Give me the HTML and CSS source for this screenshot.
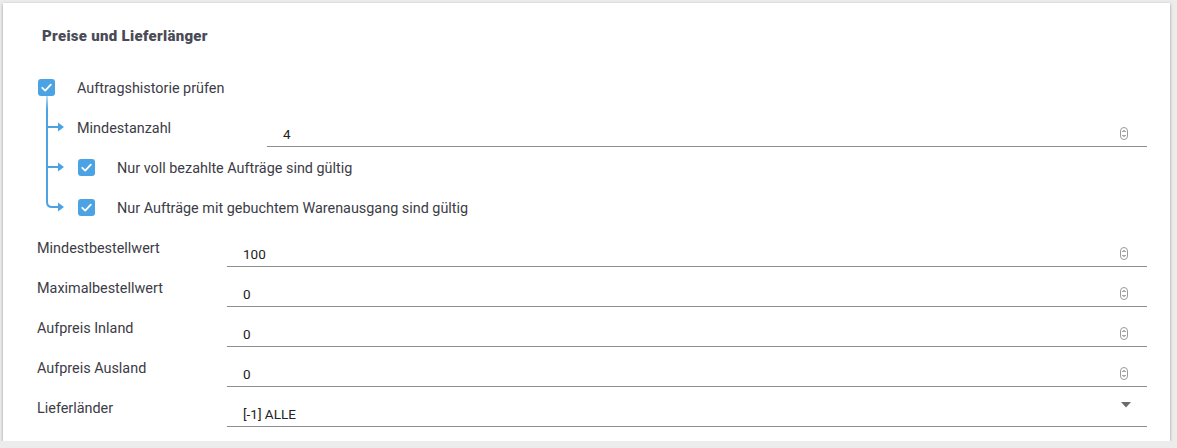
FILE: index.html
```html
<!DOCTYPE html>
<html lang="de">
<head>
<meta charset="utf-8">
<title>Preise und Lieferlänger</title>
<link rel="stylesheet" href="styles.css">
</head>
<body>
<div class="card">
  <h2 class="title">Preise und Lieferlänger</h2>

  <div class="check-row">
    <span class="cb"><svg viewBox="0 0 17 17" width="17" height="17"><path d="M4.3 8.8 L7.2 11.6 L12.8 5.6" fill="none" stroke="#fff" stroke-width="1.8" stroke-linecap="round" stroke-linejoin="round"/></svg></span>
    <span class="cb-label">Auftragshistorie prüfen</span>
  </div>

  <div class="group">
    <svg class="tree" viewBox="0 0 40 131" width="40" height="131">
      <defs>
        <linearGradient id="fade" x1="0" y1="0" x2="0" y2="1">
          <stop offset="0" stop-color="#4ba3e3" stop-opacity="0.35"/>
          <stop offset="0.12" stop-color="#4ba3e3" stop-opacity="1"/>
        </linearGradient>
      </defs>
      <path d="M10 0 L10 106 Q10 111 15 111 L22 111" fill="none" stroke="url(#fade)" stroke-width="2"/>
      <path d="M10 31 L22 31 M10 71 L22 71" fill="none" stroke="#4ba3e3" stroke-width="2"/>
      <path d="M21 26.5 L27 31 L21 35.5 Z M21 66.5 L27 71 L21 75.5 Z M21 106.5 L27 111 L21 115.5 Z" fill="#4ba3e3"/>
    </svg>
    <div class="group-rows">
      <div class="field-row">
        <span class="label">Mindestanzahl</span>
        <div class="input"><span class="value">4</span><span class="spin"><svg viewBox="0 0 8 13" width="8" height="13"><rect x="0.5" y="0.5" width="7" height="12" rx="3.5" fill="none" stroke="#9a9a9a" stroke-width="1"/><path d="M2.5 5 L4 3.5 L5.5 5 M2.5 8 L4 9.5 L5.5 8" fill="none" stroke="#555" stroke-width="1"/></svg></span></div>
      </div>
      <div class="check-row">
        <span class="cb"><svg viewBox="0 0 17 17" width="17" height="17"><path d="M4.3 8.8 L7.2 11.6 L12.8 5.6" fill="none" stroke="#fff" stroke-width="1.8" stroke-linecap="round" stroke-linejoin="round"/></svg></span>
        <span class="cb-label">Nur voll bezahlte Aufträge sind gültig</span>
      </div>
      <div class="check-row">
        <span class="cb"><svg viewBox="0 0 17 17" width="17" height="17"><path d="M4.3 8.8 L7.2 11.6 L12.8 5.6" fill="none" stroke="#fff" stroke-width="1.8" stroke-linecap="round" stroke-linejoin="round"/></svg></span>
        <span class="cb-label">Nur Aufträge mit gebuchtem Warenausgang sind gültig</span>
      </div>
    </div>
  </div>

  <div class="field-row">
    <span class="label">Mindestbestellwert</span>
    <div class="input"><span class="value">100</span><span class="spin"><svg viewBox="0 0 8 13" width="8" height="13"><rect x="0.5" y="0.5" width="7" height="12" rx="3.5" fill="none" stroke="#9a9a9a" stroke-width="1"/><path d="M2.5 5 L4 3.5 L5.5 5 M2.5 8 L4 9.5 L5.5 8" fill="none" stroke="#555" stroke-width="1"/></svg></span></div>
  </div>
  <div class="field-row">
    <span class="label">Maximalbestellwert</span>
    <div class="input"><span class="value">0</span><span class="spin"><svg viewBox="0 0 8 13" width="8" height="13"><rect x="0.5" y="0.5" width="7" height="12" rx="3.5" fill="none" stroke="#9a9a9a" stroke-width="1"/><path d="M2.5 5 L4 3.5 L5.5 5 M2.5 8 L4 9.5 L5.5 8" fill="none" stroke="#555" stroke-width="1"/></svg></span></div>
  </div>
  <div class="field-row">
    <span class="label">Aufpreis Inland</span>
    <div class="input"><span class="value">0</span><span class="spin"><svg viewBox="0 0 8 13" width="8" height="13"><rect x="0.5" y="0.5" width="7" height="12" rx="3.5" fill="none" stroke="#9a9a9a" stroke-width="1"/><path d="M2.5 5 L4 3.5 L5.5 5 M2.5 8 L4 9.5 L5.5 8" fill="none" stroke="#555" stroke-width="1"/></svg></span></div>
  </div>
  <div class="field-row">
    <span class="label">Aufpreis Ausland</span>
    <div class="input"><span class="value">0</span><span class="spin"><svg viewBox="0 0 8 13" width="8" height="13"><rect x="0.5" y="0.5" width="7" height="12" rx="3.5" fill="none" stroke="#9a9a9a" stroke-width="1"/><path d="M2.5 5 L4 3.5 L5.5 5 M2.5 8 L4 9.5 L5.5 8" fill="none" stroke="#555" stroke-width="1"/></svg></span></div>
  </div>
  <div class="field-row">
    <span class="label">Lieferländer</span>
    <div class="input select"><span class="value">[-1] ALLE</span><span class="caret"><svg viewBox="0 0 10 6" width="10" height="6"><path d="M0 0 L10 0 L5 5.5 Z" fill="#6b6b6b"/></svg></span></div>
  </div>
</div>
</body>
</html>
```

FILE: styles.css
```css
html, body {
  margin: 0;
  padding: 0;
}
body {
  background: #ececec;
  padding: 3px 0 0 3px;
  font-family: Roboto, "Liberation Sans", Arial, sans-serif;
}
.card {
  width: 1167px;
  height: 438px;
  box-sizing: border-box;
  background: #fff;
  box-shadow: 0 1px 3px rgba(0, 0, 0, 0.35);
  padding: 0 23px 14px 34px;
}
.title {
  margin: 0 0 22px 5px;
  padding-top: 24px;
  font-size: 15px;
  line-height: 18px;
  font-weight: 900;
  color: #4a4a56;
  letter-spacing: 0.3px;
}
.check-row {
  height: 40px;
  display: flex;
  align-items: center;
  padding-left: 1px;
}
.cb {
  width: 17px;
  height: 17px;
  border-radius: 3px;
  background: #4ba3e3;
  display: flex;
  flex: none;
}
.cb-label {
  margin-left: 22px;
  margin-top: 2px;
  font-size: 14.4px;
  color: #3c3c46;
}
.group {
  display: flex;
}
.tree {
  flex: none;
  margin-top: -11px;
  display: block;
}
.group-rows {
  flex: 1;
  display: flex;
  flex-direction: column;
}
.field-row {
  height: 40px;
  display: grid;
  grid-template-columns: 190px 1fr;
}
.label {
  font-size: 14.4px;
  line-height: 40px;
  color: #3c3c46;
  margin-top: 2px;
}
.input {
  height: 40px;
  box-sizing: border-box;
  border-bottom: 1px solid #8e8e8e;
  display: flex;
  align-items: flex-start;
  padding: 20px 19px 0 16px;
}
.value {
  flex: 1;
  font-size: 13.5px;
  line-height: 14px;
  color: #222;
}
.spin {
  display: flex;
}
.select {
  padding-right: 16px;
}
.caret {
  display: flex;
  margin-top: -5px;
}
```
